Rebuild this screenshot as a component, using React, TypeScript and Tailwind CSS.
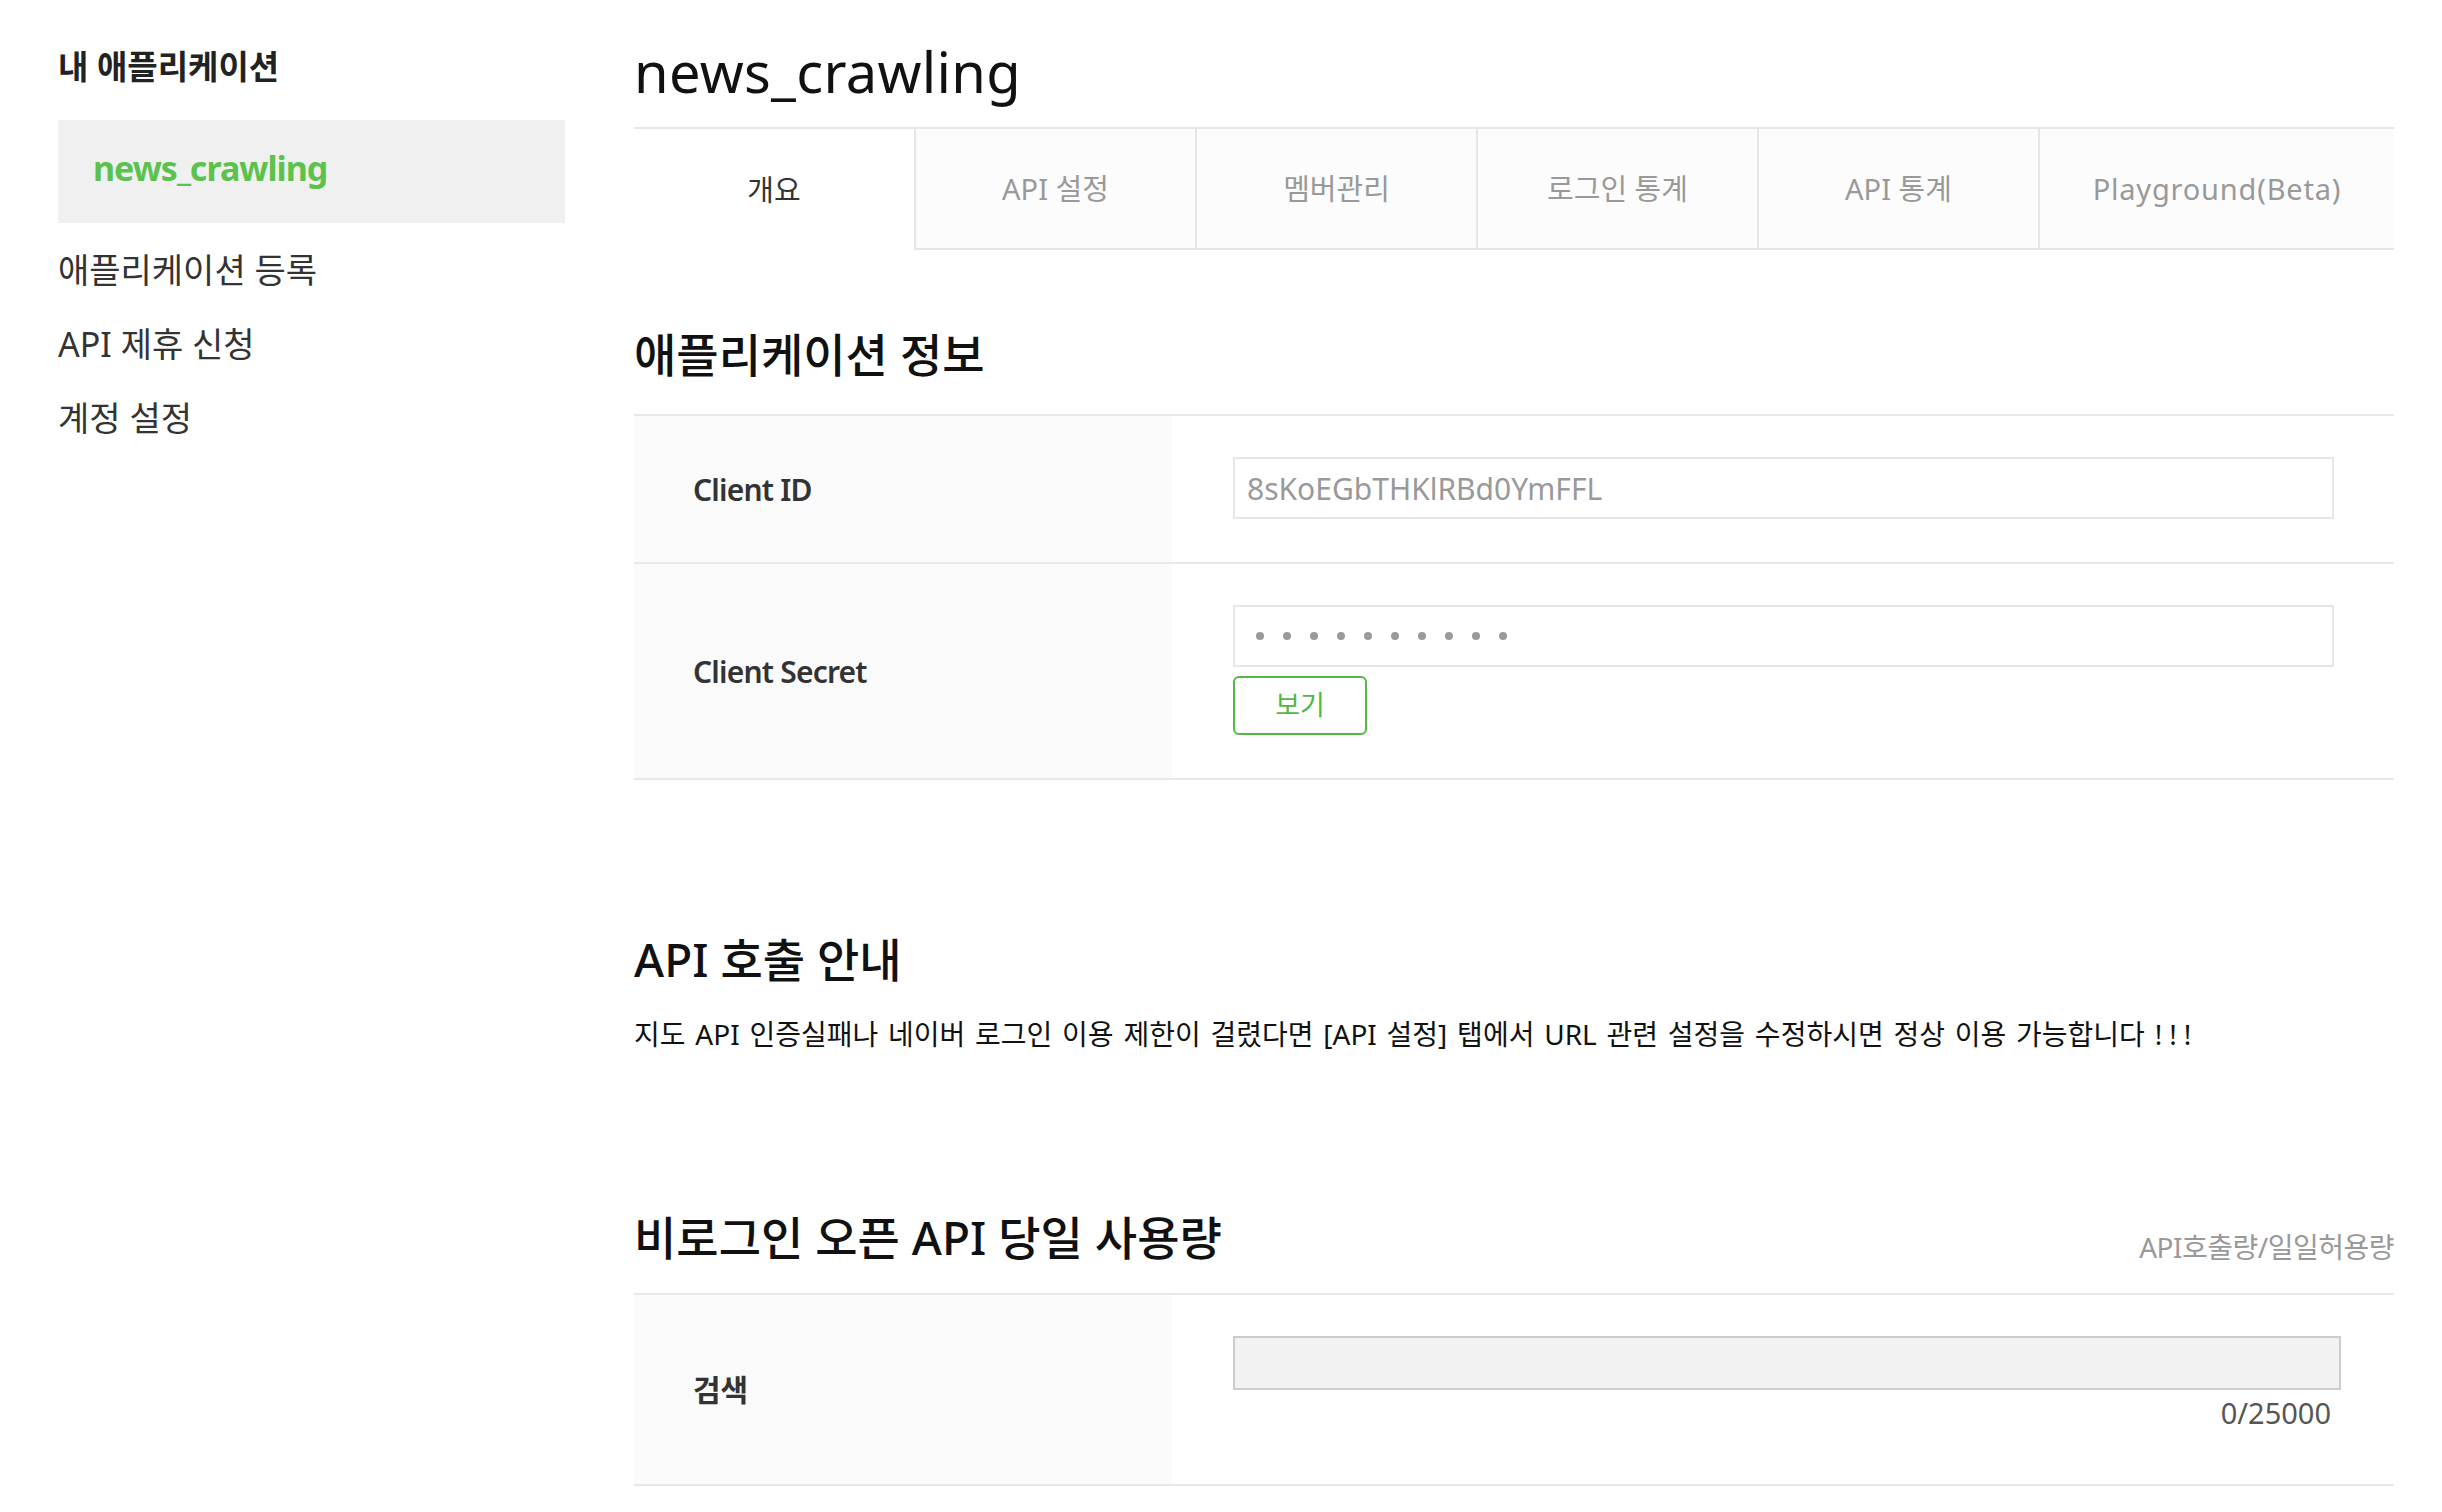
import React from "react";

const sideLinks = ["애플리케이션 등록", "API 제휴 신청", "계정 설정"];

const tabs = [
  { label: "개요", active: true, size: "w-[280px] tracking-[0px]" },
  { label: "API 설정", active: false, size: "w-[281px] tracking-[0px]" },
  { label: "멤버관리", active: false, size: "w-[281px] tracking-[0px]" },
  { label: "로그인 통계", active: false, size: "w-[281px] tracking-[0px]" },
  { label: "API 통계", active: false, size: "w-[281px] tracking-[0px]" },
  { label: "Playground(Beta)", active: false, size: "flex-1 tracking-[0.8px]" },
];

function Sidebar() {
  return (
    <aside className="ml-[58px] w-[507px] shrink-0 pt-[47px]">
      <h2 className="text-[33px] leading-[40px] font-bold text-[#222]">내 애플리케이션</h2>
      <div className="mt-[33px] flex h-[103px] items-center bg-[#f0f0f0] px-[35px] pb-[8px]">
        <span className="text-[34px] leading-[60px] font-bold tracking-[-1px] text-[#5cc24e]">news_crawling</span>
      </div>
      <ul className="mt-[27px] flex flex-col gap-[34px]">
        {sideLinks.map((label) => (
          <li key={label} className="text-[34px] leading-[40px] text-[#333]">
            {label}
          </li>
        ))}
      </ul>
    </aside>
  );
}

function Heading({ children, className = "" }: { children: React.ReactNode; className?: string }) {
  return <h3 className={`text-[46px] leading-[60px] font-medium text-[#111] ${className}`}>{children}</h3>;
}

function Row({ label, children }: { label: string; children: React.ReactNode }) {
  return (
    <div className="flex border-b-2 border-[#e8e8e8]">
      <div className="flex w-[538px] shrink-0 items-center bg-[#fafafa] pl-[59px] text-[30px] font-semibold tracking-[-0.8px] text-[#333]">
        {label}
      </div>
      <div className="flex-1 pl-[61px] pt-[41px] pb-[43px]">{children}</div>
    </div>
  );
}

export default function App() {
  return (
    <div className="flex min-h-screen w-full bg-white font-['Noto_Sans','Noto_Sans_CJK_KR',sans-serif] text-[#111]">
      <Sidebar />
      <main className="ml-[69px] w-[1760px] shrink-0 pt-[43px]">
        <h1 className="text-[56px] leading-[56px] font-normal tracking-[0.3px] text-[#111]">news_crawling</h1>

        <nav className="mt-[28px] flex border-t-2 border-[#e6e6e6]">
          {tabs.map((tab) => (
            <div
              key={tab.label}
              className={[
                "flex h-[121px] items-center justify-center text-[29px]",
                tab.size,
                tab.active
                  ? "bg-white text-[#333]"
                  : "border-b-2 border-l-2 border-[#e6e6e6] bg-[#fcfcfc] text-[#999]",
              ].join(" ")}
            >
              {tab.label}
            </div>
          ))}
        </nav>

        <Heading className="mt-[74px]">애플리케이션 정보</Heading>

        <div className="mt-[30px] border-t-2 border-[#e8e8e8]">
          <Row label="Client ID">
            <input
              readOnly
              value="8sKoEGbTHKlRBd0YmFFL"
              className="h-[62px] w-[1101px] border-2 border-[#e6e6e6] bg-white px-[12px] text-[30px] text-[#999] outline-none"
            />
          </Row>
          <Row label="Client Secret">
            <div className="flex h-[62px] w-[1101px] items-center gap-[19px] border-2 border-[#e6e6e6] bg-white pl-[21px]">
              {Array.from({ length: 10 }).map((_, i) => (
                <span key={i} className="h-[8px] w-[8px] rounded-full bg-[#9a9a9a]" />
              ))}
            </div>
            <button className="mt-[9px] h-[59px] w-[134px] rounded-[6px] border-2 border-[#4fb944] bg-white text-[27px] text-[#4fb944]">
              보기
            </button>
          </Row>
        </div>

        <Heading className="mt-[149px]">API 호출 안내</Heading>
        <p className="mt-[25px] text-[28px] leading-[40px] text-[#111] [word-spacing:2.5px]">
          지도 API 인증실패나 네이버 로그인 이용 제한이 걸렸다면 [API 설정] 탭에서 URL 관련 설정을 수정하시면 정상 이용 가능합니다{" "}
          <span className="tracking-[7px]">!!!</span>
        </p>

        <div className="mt-[153px] flex items-end justify-between">
          <Heading>비로그인 오픈 API 당일 사용량</Heading>
          <span className="text-[28px] leading-[40px] tracking-[-0.5px] text-[#999]">API호출량/일일허용량</span>
        </div>

        <div className="mt-[26px] border-t-2 border-[#e8e8e8]">
          <div className="flex border-b-2 border-[#e8e8e8]">
            <div className="flex w-[538px] shrink-0 items-center bg-[#fafafa] pl-[59px] text-[30px] font-bold text-[#333]">
              검색
            </div>
            <div className="flex-1 pl-[61px] pt-[41px] pb-[53px]">
              <div className="w-[1108px]">
                <div className="h-[54px] border-2 border-[#cccccc] bg-[#f2f2f2]" />
                <div className="mt-[5px] pr-[10px] text-right text-[29px] leading-[36px] text-[#555]">0/25000</div>
              </div>
            </div>
          </div>
        </div>
      </main>
    </div>
  );
}
